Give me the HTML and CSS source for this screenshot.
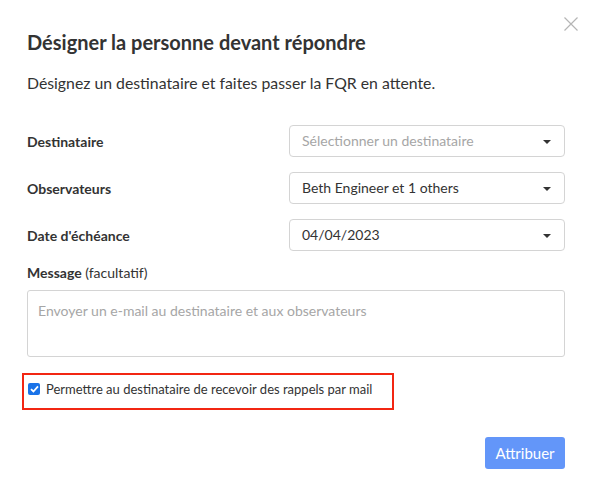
FILE: index.html
```html
<!DOCTYPE html>
<html lang="fr">
<head>
  <meta charset="UTF-8">
  <title>Désigner la personne devant répondre</title>
  <link rel="stylesheet" href="styles.css">
</head>
<body>

  <div class="modal">
    <button class="close" aria-label="Fermer">
      <svg width="14" height="14" viewBox="0 0 14 14"><path d="M0.5 0.5L13.5 13.5M13.5 0.5L0.5 13.5" stroke="#b5b5b5" stroke-width="1.2" fill="none"/></svg>
    </button>

    <h2 class="title">Désigner la personne devant répondre</h2>
    <p class="subtitle">Désignez un destinataire et faites passer la FQR en attente.</p>

    <div class="form-grid">
      <label>Destinataire</label>
      <div class="select placeholder">Sélectionner un destinataire<span class="caret"></span></div>

      <label>Observateurs</label>
      <div class="select">Beth Engineer et 1 others<span class="caret"></span></div>

      <label>Date d'échéance</label>
      <div class="select">04/04/2023<span class="caret"></span></div>
    </div>

    <div class="message-label"><b>Message</b> (facultatif)</div>
    <div class="textarea">Envoyer un e-mail au destinataire et aux observateurs</div>

    <div class="reminder">
      <span class="checkbox">
        <svg width="9" height="8" viewBox="0 0 9 8"><path d="M1 4.2L3.4 6.5L8 1.3" stroke="#fff" stroke-width="1.8" fill="none"/></svg>
      </span>
      Permettre au destinataire de recevoir des rappels par mail
    </div>

    <div class="actions">
      <button class="primary">Attribuer</button>
    </div>
  </div>

</body>
</html>
```

FILE: styles.css
```css
body {
  margin: 0;
  font-family: Lato, 'Open Sans', sans-serif;
  background-color: #ffffff;
  color: #333333;
}

.modal {
  position: relative;
  width: 592px;
  height: 497px;
  box-sizing: border-box;
  padding: 30px 27px 0 27px;
}

.close {
  position: absolute;
  top: 17px;
  right: 14px;
  padding: 0;
  border: none;
  background: none;
  cursor: pointer;
}

.close svg {
  display: block;
}

.title {
  margin: 0;
  font-size: 20px;
  line-height: 24px;
  font-weight: 700;
  color: #333333;
}

.subtitle {
  margin: 19px 0 0 0;
  font-size: 15.8px;
  line-height: 20px;
  color: #333333;
}

.form-grid {
  display: grid;
  grid-template-columns: 262px 276px;
  row-gap: 15px;
  align-items: center;
  margin-top: 32px;
}

.form-grid label {
  font-size: 14px;
  font-weight: 700;
}

.select {
  position: relative;
  height: 32px;
  box-sizing: border-box;
  border: 1px solid #d4d4d4;
  border-radius: 4px;
  padding: 0 30px 0 12px;
  font-size: 14px;
  line-height: 30px;
  color: #333333;
}

.select.placeholder {
  color: #a6a6a6;
}

.caret {
  position: absolute;
  right: 13px;
  top: 14px;
  width: 0;
  height: 0;
  border-left: 4px solid transparent;
  border-right: 4px solid transparent;
  border-top: 4px solid #333333;
}

.message-label {
  margin-top: 13px;
  font-size: 14px;
  line-height: 18px;
}

.textarea {
  margin-top: 8px;
  height: 67px;
  box-sizing: border-box;
  border: 1px solid #d4d4d4;
  border-radius: 3px;
  padding: 11px 10px;
  font-size: 14px;
  line-height: 18px;
  color: #a6a6a6;
}

.reminder {
  display: flex;
  align-items: center;
  gap: 6px;
  width: 372px;
  height: 37px;
  box-sizing: border-box;
  margin: 16px 0 0 -5px;
  padding: 0 0 6px 4px;
  border: 2px solid #f22613;
  font-size: 13px;
  white-space: nowrap;
  color: #333333;
}

.checkbox {
  display: flex;
  align-items: center;
  justify-content: center;
  width: 12px;
  height: 12px;
  border-radius: 2px;
  background-color: #1a73e8;
}

.actions {
  display: flex;
  justify-content: flex-end;
  margin-top: 27px;
}

.primary {
  width: 80px;
  height: 32px;
  border: none;
  border-radius: 3px;
  background-color: #6396f9;
  color: #ffffff;
  font-family: Lato, sans-serif;
  font-size: 15px;
  cursor: pointer;
}
```
